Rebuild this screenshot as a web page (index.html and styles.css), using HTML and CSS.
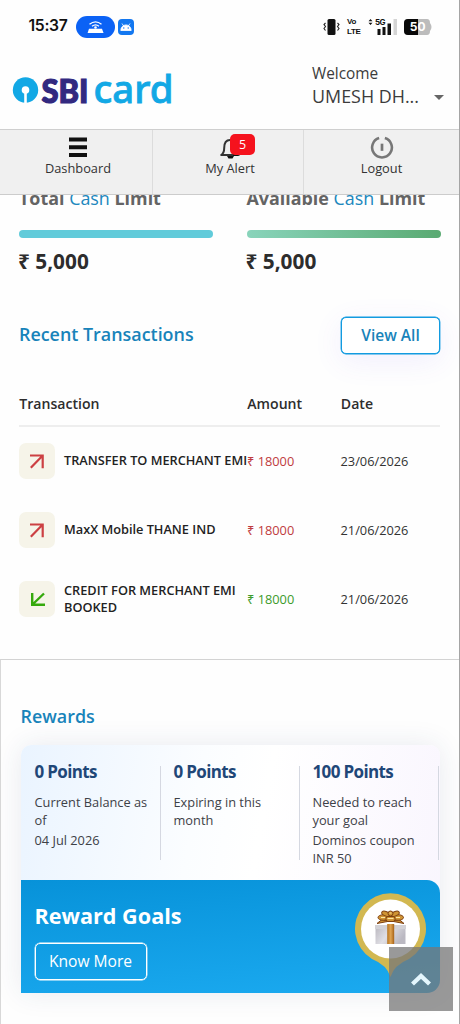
FILE: index.html
```html
<!DOCTYPE html>
<html lang="en">
<head>
<meta charset="utf-8">
<title>SBI Card</title>
<link rel="stylesheet" href="styles.css">
</head>
<body>
<div class="screen">
  <div class="status">
    <span class="time">15:37</span>
    <svg class="hotspot" width="39" height="22" viewBox="0 0 39 22"><rect width="39" height="22" rx="11" fill="#0b62f5"/><path d="M13 12.800h13l1.600 4.200H11.600z" fill="#fff"/><path d="M13.500 8.300q6-5 12 0M16 10.300q3.500-3 7 0" fill="none" stroke="#fff" stroke-width="1.300"/><circle cx="19.500" cy="11.500" r="1.300" fill="#fff"/></svg>
    <svg class="android" width="16" height="16" viewBox="0 0 16 16"><rect width="16" height="16" rx="4" fill="#1277f0"/><path d="M2.800 11.500a5.200 5.600 0 0 1 10.400 0zM4 4.500l2 3M12 4.500l-2 3" fill="#fff" stroke="#fff" stroke-width=".8"/><circle cx="5.800" cy="9" r=".7" fill="#1277f0"/><circle cx="10.200" cy="9" r=".7" fill="#1277f0"/></svg>
    <div class="signals">
      <svg width="17" height="16" viewBox="0 0 17 16"><rect x="4.500" y="0" width="8" height="16" rx="1.500" fill="#111"/><path d="M2.500 4L1 5.500 2.500 7.500 1 9.500 2.500 11.500M14.500 4L16 5.500 14.500 7.500 16 9.500 14.500 11.500" fill="none" stroke="#222" stroke-width="1.100"/></svg>
      <div class="volte"><span>Vo</span><span>LTE</span></div>
      <svg class="bars" width="30" height="17" viewBox="0 0 30 17"><path d="M.5 3.200L2.500 1l2 2.200zM.5 4.800L2.500 7l2-2.200z" fill="#111"/><text x="7" y="7" class="five-g">5G</text><path d="M9.500 11h3v6h-3zM14.500 9h3v8h-3zM19.500 5.500h3.500V17h-3.500z" fill="#111"/><path d="M25.500 1H29v16h-3.500z" fill="#d4d4d4"/></svg>
      <svg class="battery" width="28" height="16" viewBox="0 0 28 16"><path d="M4 0H23q3 0 3 4 3 4 0 8 0 4-3 4H4q-4 0-4-4V4q0-4 4-4z" fill="#bcbcbc"/><path d="M14 0H4Q0 0 0 4v8q0 4 4 4h10z" fill="#080808"/><text x="5.800" y="12.400" class="level">50</text></svg>
    </div>
  </div>

  <header class="header">
    <svg class="logo" width="162" height="36" viewBox="0 0 162 36"><circle cx="13.500" cy="20" r="12.700" fill="#12a8e5"/><circle cx="13.500" cy="20" r="3.800" fill="#fff"/><path d="M12.200 20h2.600v13h-2.600z" fill="#fff"/><text x="29.500" y="33" class="sbi" textLength="47" lengthAdjust="spacingAndGlyphs">SBI</text><text x="81.500" y="33.300" class="card-word" textLength="80" lengthAdjust="spacingAndGlyphs">card</text></svg>
    <div class="user">
      <span class="hello">Welcome</span>
      <div class="name-row"><span class="name">UMESH DH...</span><i class="caret"></i></div>
    </div>
  </header>

  <nav class="nav">
    <a class="tab"><svg width="20" height="22" viewBox="0 0 20 22"><path d="M1 1h18v4H1zM1 8.800h18v4H1zM1 16.500h18v4H1z" fill="#111"/></svg><span>Dashboard</span></a>
    <a class="tab"><span class="bell"><svg width="24" height="24" viewBox="0 0 24 24"><path d="M3.200 19q3-2 3-7 0-8 5.800-8t5.800 8q0 5 3 7z" fill="none" stroke="#333" stroke-width="2" stroke-linejoin="round"/><path d="M9 20h7l-1.500 2.500h-4zM15 17h5v3h-5z" fill="#111"/></svg><b class="badge">5</b></span><span>My Alert</span></a>
    <a class="tab"><svg width="24" height="24" viewBox="0 0 24 24"><path d="M9 2.200A10.300 10.300 0 1 0 15 2.200" fill="none" stroke="#777" stroke-width="2.700"/><path d="M12 8v7.500" stroke="#777" stroke-width="2.800"/></svg><span>Logout</span></a>
  </nav>

  <section class="limits">
    <div class="limit"><h3>Total <em>Cash</em> Limit</h3><div class="meter total"></div><p>₹ 5,000</p></div>
    <div class="limit"><h3>Available <em>Cash</em> Limit</h3><div class="meter available"></div><p>₹ 5,000</p></div>
  </section>

  <section class="transactions">
    <div class="title-row"><h2>Recent Transactions</h2><a class="view-all">View All</a></div>
    <div class="row head"><span>Transaction</span><span>Amount</span><span>Date</span></div>
    <div class="row">
      <div class="what"><i class="tile"><svg width="16" height="16" viewBox="0 0 16 16"><path d="M1 2.500h12.700v12.700M13.500 2.700L1.800 14.700" fill="none" stroke="#cc4043" stroke-width="2.200"/></svg></i><span class="desc">TRANSFER TO MERCHANT EMI</span></div>
      <span class="debit">₹ 18000</span><span class="date">23/06/2026</span>
    </div>
    <div class="row">
      <div class="what"><i class="tile"><svg width="16" height="16" viewBox="0 0 16 16"><path d="M1 2.500h12.700v12.700M13.500 2.700L1.800 14.700" fill="none" stroke="#cc4043" stroke-width="2.200"/></svg></i><span class="desc">MaxX Mobile THANE IND</span></div>
      <span class="debit">₹ 18000</span><span class="date">21/06/2026</span>
    </div>
    <div class="row">
      <div class="what"><i class="tile"><svg class="down" width="16" height="16" viewBox="0 0 16 16"><path d="M3.200 2v11.700H16M3.500 13.500L15 2.500" fill="none" stroke="#35a90d" stroke-width="2.400"/></svg></i><span class="desc">CREDIT FOR MERCHANT EMI<br>BOOKED</span></div>
      <span class="credit">₹ 18000</span><span class="date">21/06/2026</span>
    </div>
  </section>

  <section class="rewards">
    <h2>Rewards</h2>
    <div class="reward-card">
      <div class="points">
        <div class="point"><h4>0 Points</h4><p>Current Balance as<br>of</p><p>04 Jul 2026</p></div>
        <div class="point"><h4>0 Points</h4><p>Expiring in this<br>month</p></div>
        <div class="point"><h4>100 Points</h4><p>Needed to reach<br>your goal</p><p>Dominos coupon<br>INR 50</p></div>
      </div>
      <div class="banner">
        <div><h3>Reward Goals</h3><a class="know">Know More</a></div>
        <svg class="pin" width="72" height="86" viewBox="0 0 72 86">
          <defs>
            <linearGradient id="box" x1="0" x2="1" y2=".4"><stop stop-color="#b9b7be"/><stop offset=".5" stop-color="#e0dfe5"/><stop offset="1" stop-color="#bbb9c2"/></linearGradient>
            <linearGradient id="ribbon"><stop stop-color="#b87520"/><stop offset=".5" stop-color="#dfa452"/><stop offset="1" stop-color="#a66116"/></linearGradient>
          </defs>
          <path d="M35.500 84Q32 72 17 66A35.500 35.500 0 1 1 54 66Q39 72 35.500 84z" fill="#d2b851"/>
          <circle cx="35.500" cy="36" r="29.500" fill="#fff"/>
          <path d="M20.500 33h30v18h-30z" fill="url(#box)"/><path d="M20 32h31v4H20z" fill="#d2d1d6"/>
          <path d="M32.200 31h7v20h-7z" fill="url(#ribbon)"/>
          <g fill="#cf9434" stroke="#7e3f10" stroke-width="1"><path d="M35 28L22 30.500l5-4zM36 28l13 2.500-5-4z"/><ellipse cx="28.500" cy="24.500" rx="5.500" ry="2.800"/><ellipse cx="43" cy="24.500" rx="5.500" ry="2.800"/><ellipse cx="31" cy="20.800" rx="4.500" ry="2.200" transform="rotate(20 31 20.800)"/><ellipse cx="40" cy="20.800" rx="4.500" ry="2.200" transform="rotate(-20 40 20.800)"/><ellipse cx="35.500" cy="20.500" rx="2.500" ry="2.500"/><rect x="31" y="23.500" width="9" height="5" rx="2"/></g>
          <path d="M26 24.500h4M32.500 25.500h6M41 24.500h4M34.500 20h2" stroke="#ffe6a3" stroke-width="1"/>
        </svg>
      </div>
    </div>
  </section>

  <div class="to-top"><svg width="22" height="16" viewBox="0 0 22 16"><path d="M2.500 13L11 5l8.500 8" fill="none" stroke="#e4f6fd" stroke-width="4.300"/></svg></div>
  <div class="edge"></div>
</div>
</body>
</html>
```
FILE: styles.css
```css
* { box-sizing: border-box; }
body, h2, h3, h4, p { margin: 0; }
body { background: #fff; font-family: "Open Sans", "Noto Sans", sans-serif; color: #333; }
svg { display: block; flex: none; }
span, h2, h3, h4, p, a { white-space: nowrap; }
.screen { position: relative; width: 460px; height: 1024px; overflow: hidden; background: #fefefe; }
.edge { position: absolute; right: 0; top: 0; width: 1px; height: 100%; background: #a5a5a5; z-index: 2; }

.status { display: flex; align-items: center; height: 53px; padding: 0 28px 0 28.500px; }
.time { font: 600 15.700px/20px Inter, sans-serif; color: #111; width: 47px; letter-spacing: -.3px; padding-bottom: 1px; }
.hotspot { margin-right: 3px; }
.signals { display: flex; align-items: center; margin-left: auto; }
.volte { display: flex; flex-direction: column; margin: 0 7px 0 7px; width: 14px; font: 700 8px/10px "Liberation Sans", sans-serif; color: #111; letter-spacing: -.3px; }
.five-g { font: 700 8px Inter, sans-serif; fill: #111; letter-spacing: -.5px; }
.battery { margin-left: 6px; }
.level { font: 700 12px Inter, sans-serif; fill: #fff; }

.header { display: flex; justify-content: space-between; height: 76px; padding: 9px 16px 0 12px; }
.logo { margin-top: 8px; overflow: visible; }
.sbi { font: 900 33px Lato, sans-serif; fill: #322980; stroke: #322980; stroke-width: 1.200px; }
.card-word { font: 500 38.500px "Noto Sans", sans-serif; fill: #12a8e5; stroke: #12a8e5; stroke-width: .8px; }
.user { width: 132px; padding-top: 1px; }
.hello { display: block; font-size: 15.400px; line-height: 22px; color: #3c3c3c; }
.name-row { display: flex; align-items: center; justify-content: space-between; height: 23px; }
.name { font-size: 17.900px; line-height: 24px; padding-bottom: 1px; color: #3c3c3c; }
.caret { border: 5px solid transparent; border-top-color: #666; border-bottom: 0; margin-top: 2px; }

.nav { display: flex; height: 66px; background: #f0f0f0; border-top: 1px solid #cfcfcf; border-bottom: 1px solid #ccc; position: relative; z-index: 1; }
.tab { flex: none; width: 151px; display: flex; flex-direction: column; align-items: center; padding-top: 6px; font-size: 12.800px; line-height: 18px; color: #333; }
.tab:first-child { width: 152px; padding-left: 4px; }
.tab:last-child { width: 157px; padding-right: 1px; }
.tab + .tab { border-left: 1px solid #dcdcdc; }
.tab:nth-child(2) { padding-left: 4px; }
.tab > :first-child { height: 23px; }
.bell { position: relative; width: 24px; }
.badge { position: absolute; left: 12px; top: -2px; width: 25px; height: 21px; border-radius: 5px; background: #f5121d; color: #fff; font-weight: 400; font-size: 12.500px; line-height: 21px; text-align: center; }

.limits { display: flex; gap: 33px; padding: 0 19px; height: 82px; margin-top: -9px; }
.limit { width: 194.500px; }
.limit h3 { font-size: 17.900px; line-height: 24px; color: #646464; font-weight: 700; }
.limit em { font-style: normal; font-weight: 400; color: #2087bd; }
.meter { height: 8px; border-radius: 4px; margin-top: 20px; width: 194px; }
.total { background: #61cbda; }
.available { background: linear-gradient(90deg, #89d4bb, #5aaa72); }
.limit p { font-size: 20.800px; line-height: 28px; font-weight: 700; margin: 9px 0 0 -1px; color: #2d2d2d; }

h2 { font-size: 17.900px; line-height: 26px; font-weight: 600; color: #1883ba; }
.transactions { height: 391px; padding: 48px 19px 0; }
.title-row { display: flex; justify-content: space-between; align-items: center; height: 38px; }
.title-row h2 { padding-bottom: 2px; }
.view-all { width: 99px; height: 37px; border: 1px solid #129be0; border-radius: 5px; background: #fff; color: #1883ba; font-size: 15.500px; font-weight: 600; line-height: 35px; text-align: center; box-shadow: 0 0 0 .4px #129be0, 0 7px 30px rgba(110, 80, 240, .09); margin-right: 1px; }
.row { display: grid; grid-template-columns: 228px 93.500px 1fr; align-items: center; height: 69px; font-size: 12.800px; }
.head { height: 45px; margin: 28px 1px -1px 0; font-size: 14.100px; font-weight: 600; border-bottom: 2px solid #eee; color: #2d2d2d; }
.head span { padding-left: .3px; }
.what { display: flex; align-items: center; gap: 9px; }
.tile { width: 36px; height: 36px; flex: none; border-radius: 7px; background: #f6f4e9; display: grid; place-items: center; }
.desc { font-weight: 600; font-size: 12.750px; line-height: 17px; color: #222; }
.debit { color: #bf3b40; }
.credit { color: #3c9b2b; }

.rewards { height: 366px; border-top: 1px solid #d3d3d3; border-left: 1px solid #d8d8d8; padding: 43px 20px 0 20px; }
.rewards h2 { margin-left: -.5px; }
.reward-card { height: 248px; margin-top: 16px; border-radius: 10px 10px 13px 0; box-shadow: 0 0 28px rgba(40, 60, 110, .1); background: linear-gradient(100deg, #eaf4ff 0, #fbfdff 40%, #fff 55%, #f9f5fe 100%); display: flex; flex-direction: column; }
.points { height: 135px; display: flex; padding-top: 15px; }
.point { width: 139px; padding: 0 0 0 13.500px; position: relative; }
.point::after { content: ""; position: absolute; right: -1px; top: 6px; width: 1px; height: 94px; background: #d5d8e1; }
.point h4 { font-size: 17px; line-height: 24px; font-weight: 700; color: #1f4778; letter-spacing: -.65px; margin-bottom: 9px; }
.point p { font-size: 12.800px; line-height: 18px; color: #3d4147; margin-bottom: 2px; }
.banner { height: 113px; border-radius: 0 13px 13px 0; background: linear-gradient(175deg, #0792d9, #1baaf0); display: flex; justify-content: space-between; padding: 13px 13px 0 13.500px; }
.banner h3 { font-size: 21.600px; line-height: 30px; color: #fff; margin-top: 8px; font-weight: 700; }
.know { display: block; width: 112px; height: 37px; margin-top: 12px; border: 1px solid #fff; box-shadow: 0 0 0 .4px #fff; border-radius: 5px; color: #fff; font-size: 15.600px; line-height: 34px; text-align: center; }
.to-top { position: absolute; left: 389px; top: 947px; width: 64px; height: 64px; background: rgba(119, 119, 119, .75); display: grid; place-items: center; }
```
